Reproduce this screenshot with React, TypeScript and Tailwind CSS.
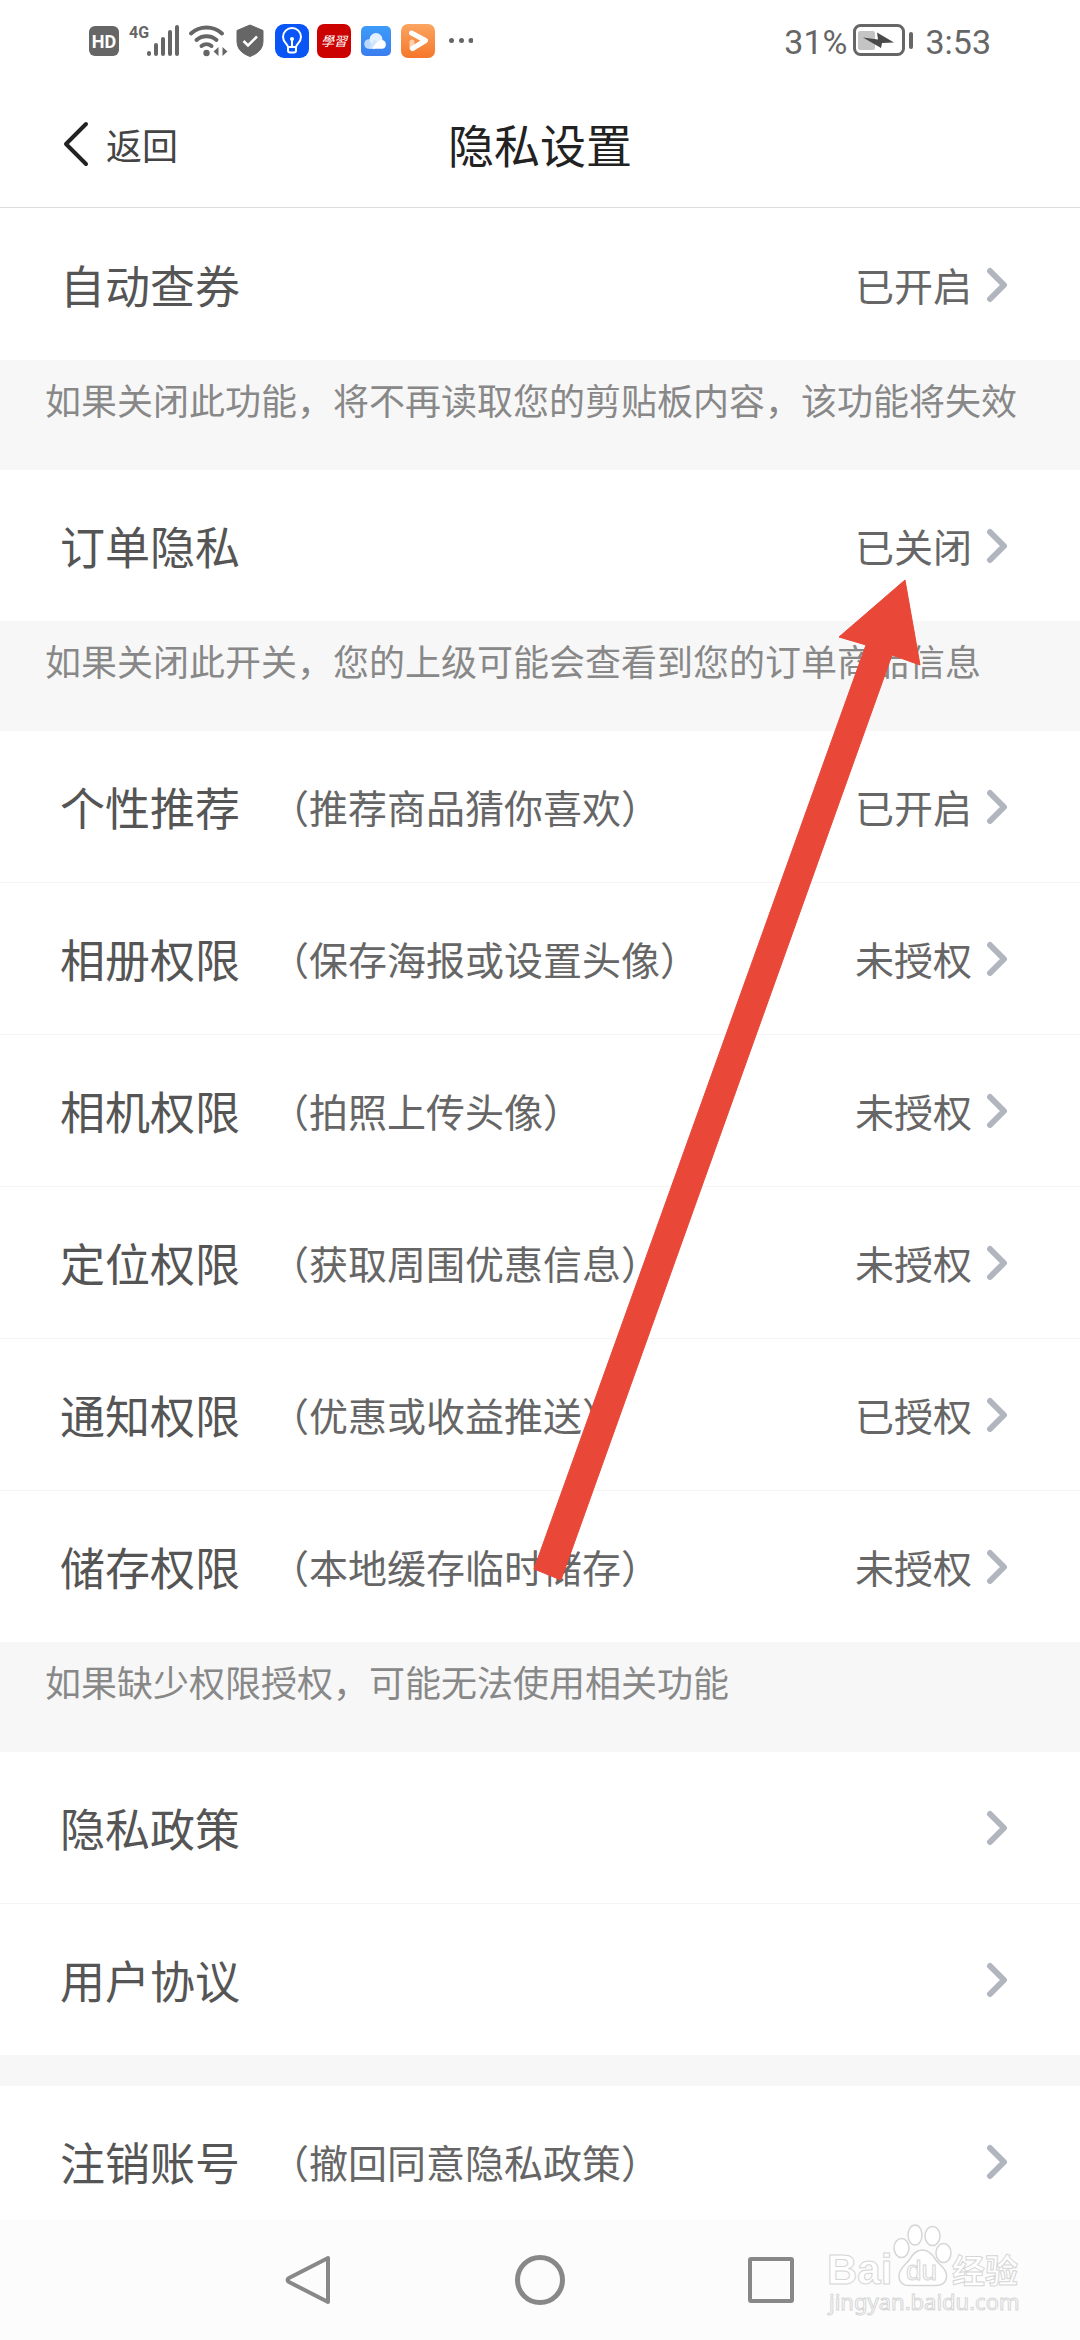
import clsx from 'clsx'

type Item = {
  label: string
  detail?: string
  status?: string
}

type Section = {
  items: Item[]
  hint?: string
}

const sections: Section[] = [
  {
    items: [{ label: '自动查券', status: '已开启' }],
    hint: '如果关闭此功能，将不再读取您的剪贴板内容，该功能将失效',
  },
  {
    items: [{ label: '订单隐私', status: '已关闭' }],
    hint: '如果关闭此开关，您的上级可能会查看到您的订单商品信息',
  },
  {
    items: [
      { label: '个性推荐', detail: '（推荐商品猜你喜欢）', status: '已开启' },
      { label: '相册权限', detail: '（保存海报或设置头像）', status: '未授权' },
      { label: '相机权限', detail: '（拍照上传头像）', status: '未授权' },
      { label: '定位权限', detail: '（获取周围优惠信息）', status: '未授权' },
      { label: '通知权限', detail: '（优惠或收益推送）', status: '已授权' },
      { label: '储存权限', detail: '（本地缓存临时储存）', status: '未授权' },
    ],
    hint: '如果缺少权限授权，可能无法使用相关功能',
  },
  {
    items: [{ label: '隐私政策' }, { label: '用户协议' }],
  },
  {
    items: [{ label: '注销账号', detail: '（撤回同意隐私政策）' }],
  },
]

function SignalIcons() {
  return (
    <svg width="384" height="36" viewBox="0 0 384 36" aria-hidden="true">
      {/* HD */}
      <rect x="0" y="4" width="30" height="30" rx="6" fill="#666" />
      <text
        x="15"
        y="26"
        textAnchor="middle"
        fontSize="18"
        fontWeight="700"
        fill="#fff"
        className="font-['Roboto',sans-serif]"
      >
        HD
      </text>
      {/* mobile signal */}
      <text
        x="40"
        y="16"
        fontSize="16"
        fontWeight="700"
        fill="#666"
        className="font-['Roboto',sans-serif]"
      >
        4G
      </text>
      <g stroke="#666" strokeWidth="4" strokeLinecap="round">
        <path d="M60 31v1M67 23v9M74 17v15M81 10v22M88 5v27" />
      </g>
      {/* wifi */}
      <g fill="none" stroke="#666" strokeWidth="4" strokeLinecap="round">
        <path d="M102 11.500a23 23 0 0 1 31 0" />
        <path d="M107.500 18a15 15 0 0 1 20 0" />
        <path d="M112.500 24a8 8 0 0 1 10 0" />
      </g>
      <circle cx="117.500" cy="31" r="3.200" fill="#666" />
      <path d="M124.500 29.500l5-4.500v9zM138.500 29.500l-5-4.500v9z" fill="#666" />
      {/* shield */}
      <path
        d="M161 3l13 5.500v10.500c0 8-5 12.500-13 15.500c-8-3-13-7.500-13-15.500v-10.500z"
        fill="#666"
        stroke="#666"
        strokeLinejoin="round"
      />
      <path d="M154.500 19l4.500 4.500l9-9" fill="none" stroke="#fff" strokeWidth="2.500" />
      {/* light bulb */}
      <rect x="186" y="2" width="34" height="34" rx="9" fill="#0a55f5" />
      <g fill="none" stroke="#fff" strokeWidth="2" strokeLinejoin="round">
        <path d="M199 25c0-3-5-4.500-5-10a9 9 0 0 1 18 0c0 5.500-5 7-5 10z" />
        <path d="M199 25v3.500q0 2 2 2h4q2 0 2-2v-3.500M203 17v8" />
      </g>
      <circle cx="203" cy="17" r="2" fill="#fff" />
      {/* study */}
      <rect x="228" y="2" width="34" height="34" rx="7" fill="#cc0200" />
      <text
        x="245"
        y="24"
        textAnchor="middle"
        fontSize="13"
        fontStyle="italic"
        fill="#fff"
        className="font-['Noto_Sans_CJK_TC',sans-serif]"
      >
        學習
      </text>
      {/* cloud */}
      <rect x="272" y="4" width="30" height="30" rx="5" fill="url(#cloudBg)" />
      <circle cx="280" cy="22" r="4.800" fill="#b9d9fd" />
      <circle cx="287" cy="17.500" r="6.500" fill="#e3f0ff" />
      <path d="M280 26.800h6l5-6l-6-3z" fill="#d0e5fe" />
      <path d="M283 26.800c3-4 5-8.800 10-8.800a4.500 4.500 0 0 1 0.500 8.800z" fill="#fff" />
      {/* video */}
      <rect x="312" y="2" width="34" height="34" rx="7" fill="url(#videoBg)" />
      <path
        d="M323 26v-6"
        stroke="#fdd0ab"
        strokeWidth="5"
        strokeLinecap="round"
      />
      <path
        d="M322.500 11l14 7.500l-13 8"
        fill="none"
        stroke="#fff"
        strokeWidth="5"
        strokeLinecap="round"
        strokeLinejoin="round"
      />
      <g fill="#666">
        <circle cx="362.500" cy="18.500" r="2.500" />
        <circle cx="372.500" cy="18.500" r="2.500" />
        <circle cx="382" cy="18.500" r="2.500" />
      </g>
      <defs>
        <linearGradient id="cloudBg" x1="0" y1="0" x2="0" y2="1">
          <stop offset="0" stopColor="#3d9cf8" />
          <stop offset="1" stopColor="#3a7df0" />
        </linearGradient>
        <linearGradient id="videoBg" x1="0" y1="0" x2="0" y2="1">
          <stop offset="0" stopColor="#fba561" />
          <stop offset="1" stopColor="#f5772b" />
        </linearGradient>
      </defs>
    </svg>
  )
}

function BatteryIcon() {
  return (
    <svg width="60" height="32" viewBox="0 0 60 32" aria-hidden="true">
      <rect x="1.500" y="1.500" width="49" height="29" rx="6" fill="none" stroke="#666" strokeWidth="3" />
      <rect x="5" y="7" width="17" height="19" rx="2" fill="#c4c4c4" />
      <path d="M10 13.500l15 2l-1-7l17 10l-12 0.500l-1 5z" fill="#4a4a4a" />
      <rect x="56" y="8" width="4" height="17" rx="2" fill="#666" />
    </svg>
  )
}

function StatusBar() {
  return (
    <div className="flex h-20 shrink-0 items-center justify-between pr-[89px] pl-[89px]">
      <SignalIcons />
      <div className="flex items-center gap-3 text-[#666]">
        <div className="flex items-center gap-1.5">
          <span className="pt-1 font-['Roboto',sans-serif] text-[34px] leading-10">31%</span>
          <BatteryIcon />
        </div>
        <span className="pt-1 font-['Roboto',sans-serif] text-[34px] leading-10">3:53</span>
      </div>
    </div>
  )
}

function Header() {
  return (
    <header className="grid h-32 shrink-0 grid-cols-3 items-center border-b border-[#dcdcdc] px-[62px]">
      <button className="flex items-center gap-4 justify-self-start text-[36px] text-[#444]">
        <svg width="28" height="46" viewBox="0 0 28 46" fill="none" aria-hidden="true">
          <path
            d="M24 3L4 23L24 43"
            stroke="#222"
            strokeWidth="4"
            strokeLinecap="round"
            strokeLinejoin="round"
          />
        </svg>
        返回
      </button>
      <h1 className="text-center text-[46px] whitespace-nowrap text-[#222]">隐私设置</h1>
    </header>
  )
}

function Chevron() {
  return (
    <svg width="22" height="36" viewBox="0 0 22 36" fill="none" aria-hidden="true">
      <path
        d="M4 4L18 18L4 32"
        stroke="#b0b5be"
        strokeWidth="6"
        strokeLinecap="round"
        strokeLinejoin="round"
      />
    </svg>
  )
}

function SettingRow({ item, divided }: { item: Item; divided: boolean }) {
  return (
    <li className={clsx(divided && 'border-b border-[#f4f4f4]')}>
      <button className="flex h-[151px] w-full items-center pr-[72px] pl-[60px] text-left text-[39px] text-[#666]">
        <span className="text-[45px] text-[#555]">{item.label}</span>
        {item.detail && <span className="ml-[30px]">{item.detail}</span>}
        <span className="mr-3.5 ml-auto">{item.status}</span>
        <Chevron />
      </button>
    </li>
  )
}

function PawIcon() {
  return (
    <g fill="#fff" stroke="#d6d6d6" strokeWidth="1.500">
      <ellipse cx="75.500" cy="26" rx="7.500" ry="9.500" />
      <ellipse cx="89" cy="13" rx="7" ry="10" />
      <ellipse cx="106.500" cy="14" rx="7.500" ry="9.500" />
      <ellipse cx="117.500" cy="31" rx="7.500" ry="9.500" />
      <path d="M96 28c-6 0-9 4-12 9c-4 6-11 9-11 17c0 7 5 10 11 9.500h26c6 0 11-3 10.500-11c-1-7-7-9-11-15c-3-5-7-9.500-13.500-9.500z" />
    </g>
  )
}

function Watermark() {
  return (
    <svg
      className="absolute right-[50px] bottom-5"
      width="204"
      height="98"
      viewBox="0 0 204 98"
      fill="#fff"
      stroke="#d6d6d6"
      strokeWidth="1"
    >
      <text x="1" y="62" fontSize="42" fontWeight="700" className="font-['Liberation_Sans',sans-serif]">
        Bai
      </text>
      <PawIcon />
      <text x="80" y="58" fontSize="28" className="font-['Liberation_Sans',sans-serif]">
        du
      </text>
      <text x="126" y="61" fontSize="33" fontWeight="700" className="font-['Noto_Sans_CJK_SC',sans-serif]">
        经验
      </text>
      <text x="3" y="88" fontSize="22" className="font-['Noto_Sans',sans-serif]">
        jingyan.baidu.com
      </text>
    </svg>
  )
}

function NavBar() {
  const button = 'flex h-[50px] w-[50px] items-center justify-center'
  return (
    <nav className="relative flex h-[120px] shrink-0 items-center justify-center gap-[181px] bg-[#fcfcfc]">
      <button className={button} aria-label="返回">
        <svg width="50" height="50" viewBox="0 0 50 50" fill="none">
          <path
            d="M44 3V47L5 27Q2 25 5 23Z"
            stroke="#888"
            strokeWidth="4"
            strokeLinejoin="round"
          />
        </svg>
      </button>
      <button className={button} aria-label="主屏幕">
        <span className="h-[50px] w-[50px] rounded-full border-[5px] border-[#888]" />
      </button>
      <button className={button} aria-label="最近任务">
        <span className="h-[46px] w-[46px] rounded-[3px] border-4 border-[#888]" />
      </button>
      <Watermark />
    </nav>
  )
}

// hand-drawn pointer lying over the list
function PointerArrow() {
  return (
    <svg
      className="pointer-events-none absolute top-[576px] left-[530px]"
      width="396"
      height="1010"
      viewBox="530 576 396 1010"
      aria-hidden="true"
    >
      <path
        d="M905 580L920 665L892 655L561 1580L534 1569L866 645L839 637Z"
        fill="#e94738"
        stroke="#e94738"
        strokeWidth="1"
        strokeLinejoin="round"
      />
    </svg>
  )
}

export default function App() {
  return (
    <div className="relative flex h-screen flex-col overflow-hidden bg-white font-['Noto_Sans_CJK_SC',sans-serif]">
      <StatusBar />
      <Header />
      <main className="min-h-0 flex-1 overflow-hidden pt-px">
        {sections.map((section, index) => (
          <section key={index}>
            <ul>
              {section.items.map((item, i) => (
                <SettingRow
                  key={item.label}
                  item={item}
                  divided={i < section.items.length - 1}
                />
              ))}
            </ul>
            {section.hint ? (
              <p className="h-[110px] bg-[#f7f7f7] px-[45px] pt-3 text-[36px] leading-[54px] whitespace-nowrap text-[#888]">
                {section.hint}
              </p>
            ) : (
              <div className="h-[31px] bg-[#f7f7f7]" />
            )}
          </section>
        ))}
      </main>
      <NavBar />
      <PointerArrow />
    </div>
  )
}
